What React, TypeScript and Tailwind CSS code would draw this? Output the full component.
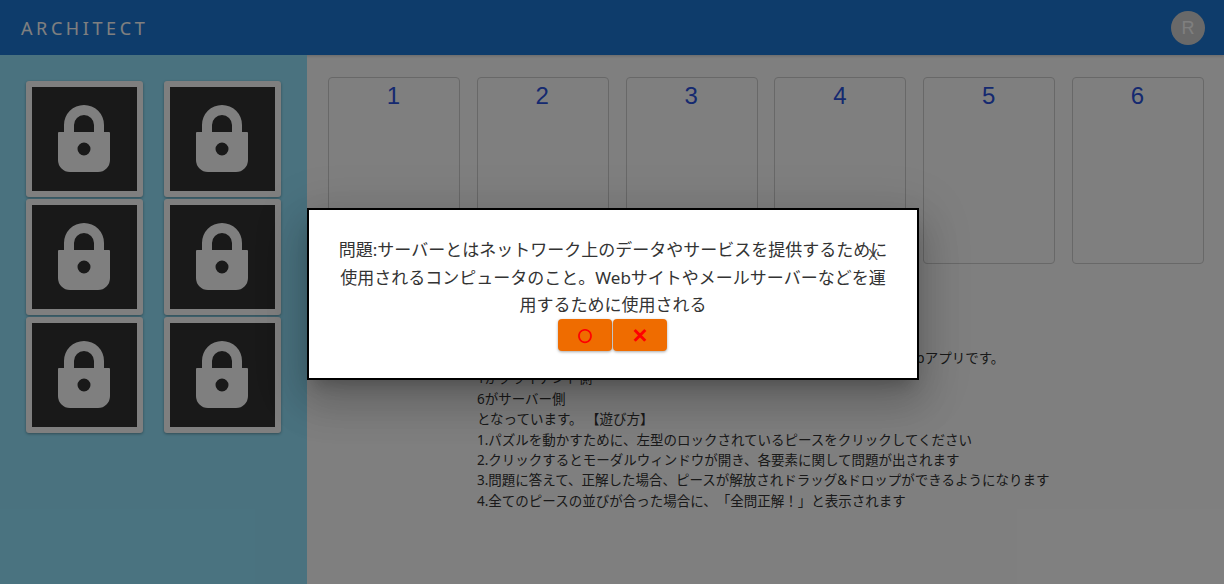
const JP = "font-['Noto_Sans','Noto_Sans_CJK_JP',sans-serif]";

function Lock() {
  return (
    <svg viewBox="0 0 105 104" className="block h-full w-full">
      <path
        fillRule="evenodd"
        fill="#ffffff"
        d="M32 45 V38 A20 20 0 0 1 72 38 V45 H77 Q78 45 78 46 V73 A12 12 0 0 1 66 85 H38 A12 12 0 0 1 26 73 V46 Q26 45 27 45 Z M42 45 H62 V38 A10 10 0 0 0 42 38 Z M52 55.5 A6.5 6.5 0 1 0 52 68.5 A6.5 6.5 0 1 0 52 55.5 Z"
      />
    </svg>
  );
}

function Tile() {
  return (
    <div className="box-border h-[116px] w-[117px] rounded-[3px] border-[6px] border-white bg-[#333333] shadow-[0_1px_3px_rgba(0,0,0,0.35)]">
      <Lock />
    </div>
  );
}

export default function App() {
  return (
    <div className={`relative h-[584px] w-[1224px] overflow-hidden bg-white ${JP}`}>
      <header className="flex h-[55px] items-center justify-between bg-[#1c79d6] pl-[21px] pr-[19px] shadow-[0_1px_3px_rgba(0,0,0,0.2)]">
        <span className="text-[18px] font-normal leading-none tracking-[0.2em] text-white">ARCHITECT</span>
        <div className="flex h-[34px] w-[34px] items-center justify-center rounded-full bg-[#d2d2d2] font-['Liberation_Sans',sans-serif] text-[18px] leading-none text-white">
          R
        </div>
      </header>
      <div className="flex h-[529px]">
        <aside className="w-[307px] shrink-0 bg-[#94e5ff] pl-[26px] pt-[26px]">
          <div className="grid grid-cols-[117px_117px] gap-x-[21px] gap-y-[2px]">
            {[0, 1, 2, 3, 4, 5].map((i) => (
              <Tile key={i} />
            ))}
          </div>
        </aside>
        <main className="flex-1 pl-[21px] pr-[19px] pt-[22px]">
          <div className="flex gap-[16.8px]">
            {[1, 2, 3, 4, 5, 6].map((n) => (
              <div
                key={n}
                className="box-border h-[187px] w-[132px] rounded-[4px] border border-[#d0d0d0] pr-px text-center font-['Liberation_Sans',sans-serif] text-[24px] leading-[36px] text-[#2a52e0]"
              >
                {n}
              </div>
            ))}
          </div>
          <div className="ml-[149px] mt-[84px] text-[13.5px] leading-[20.4px] text-[#333333] [text-spacing-trim:space-all]">
            <p>このパズルは、Webアプリケーションの構成要素を正しい順に並べるWebアプリです。</p>
            <p>1がクライアント側</p>
            <p>6がサーバー側</p>
            <p>となっています。 【遊び方】</p>
            <p>1.パズルを動かすために、左型のロックされているピースをクリックしてください</p>
            <p>2.クリックするとモーダルウィンドウが開き、各要素に関して問題が出されます</p>
            <p>3.問題に答えて、正解した場合、ピースが解放されドラッグ&amp;ドロップができるようになります</p>
            <p>4.全てのピースの並びが合った場合に、「全問正解！」と表示されます</p>
          </div>
        </main>
      </div>
      <div className="absolute inset-0 flex items-start justify-center bg-black/50 pl-[2px] pt-[208px]">
        <div className="relative box-border h-[172px] w-[612px] border-2 border-black bg-white pt-[26px] text-center text-[17px] leading-[27.5px] text-[#333333] shadow-[0_11px_15px_-7px_rgba(0,0,0,0.2),0_24px_38px_3px_rgba(0,0,0,0.14),0_9px_46px_8px_rgba(0,0,0,0.12)]">
          <p className="whitespace-nowrap">問題:サーバーとはネットワーク上のデータやサービスを提供するために</p>
          <p className="whitespace-nowrap">使用されるコンピュータのこと。Webサイトやメールサーバーなどを運</p>
          <p className="whitespace-nowrap">用するために使用される</p>
          <div className="flex justify-center gap-px pr-[1px]">
            <button className="flex h-[32px] w-[54px] items-center justify-center rounded-[4px] bg-[#ef6c00] font-['Noto_Sans_CJK_JP',sans-serif] text-[14px] font-bold leading-none text-[#ff0000] shadow-[0_1px_3px_rgba(0,0,0,0.35)] [-webkit-text-stroke:1px_#ff0000]">
              ○
            </button>
            <button className="flex h-[32px] w-[54px] items-center justify-center rounded-[4px] bg-[#ef6c00] font-['Noto_Sans_CJK_JP',sans-serif] text-[17px] font-bold leading-none text-[#ff0000] shadow-[0_1px_3px_rgba(0,0,0,0.35)] [-webkit-text-stroke:1px_#ff0000]">
              ×
            </button>
          </div>
          <span className="absolute left-[559px] top-[33px] text-[20px] font-light leading-none text-[#444444]">x</span>
        </div>
      </div>
    </div>
  );
}
